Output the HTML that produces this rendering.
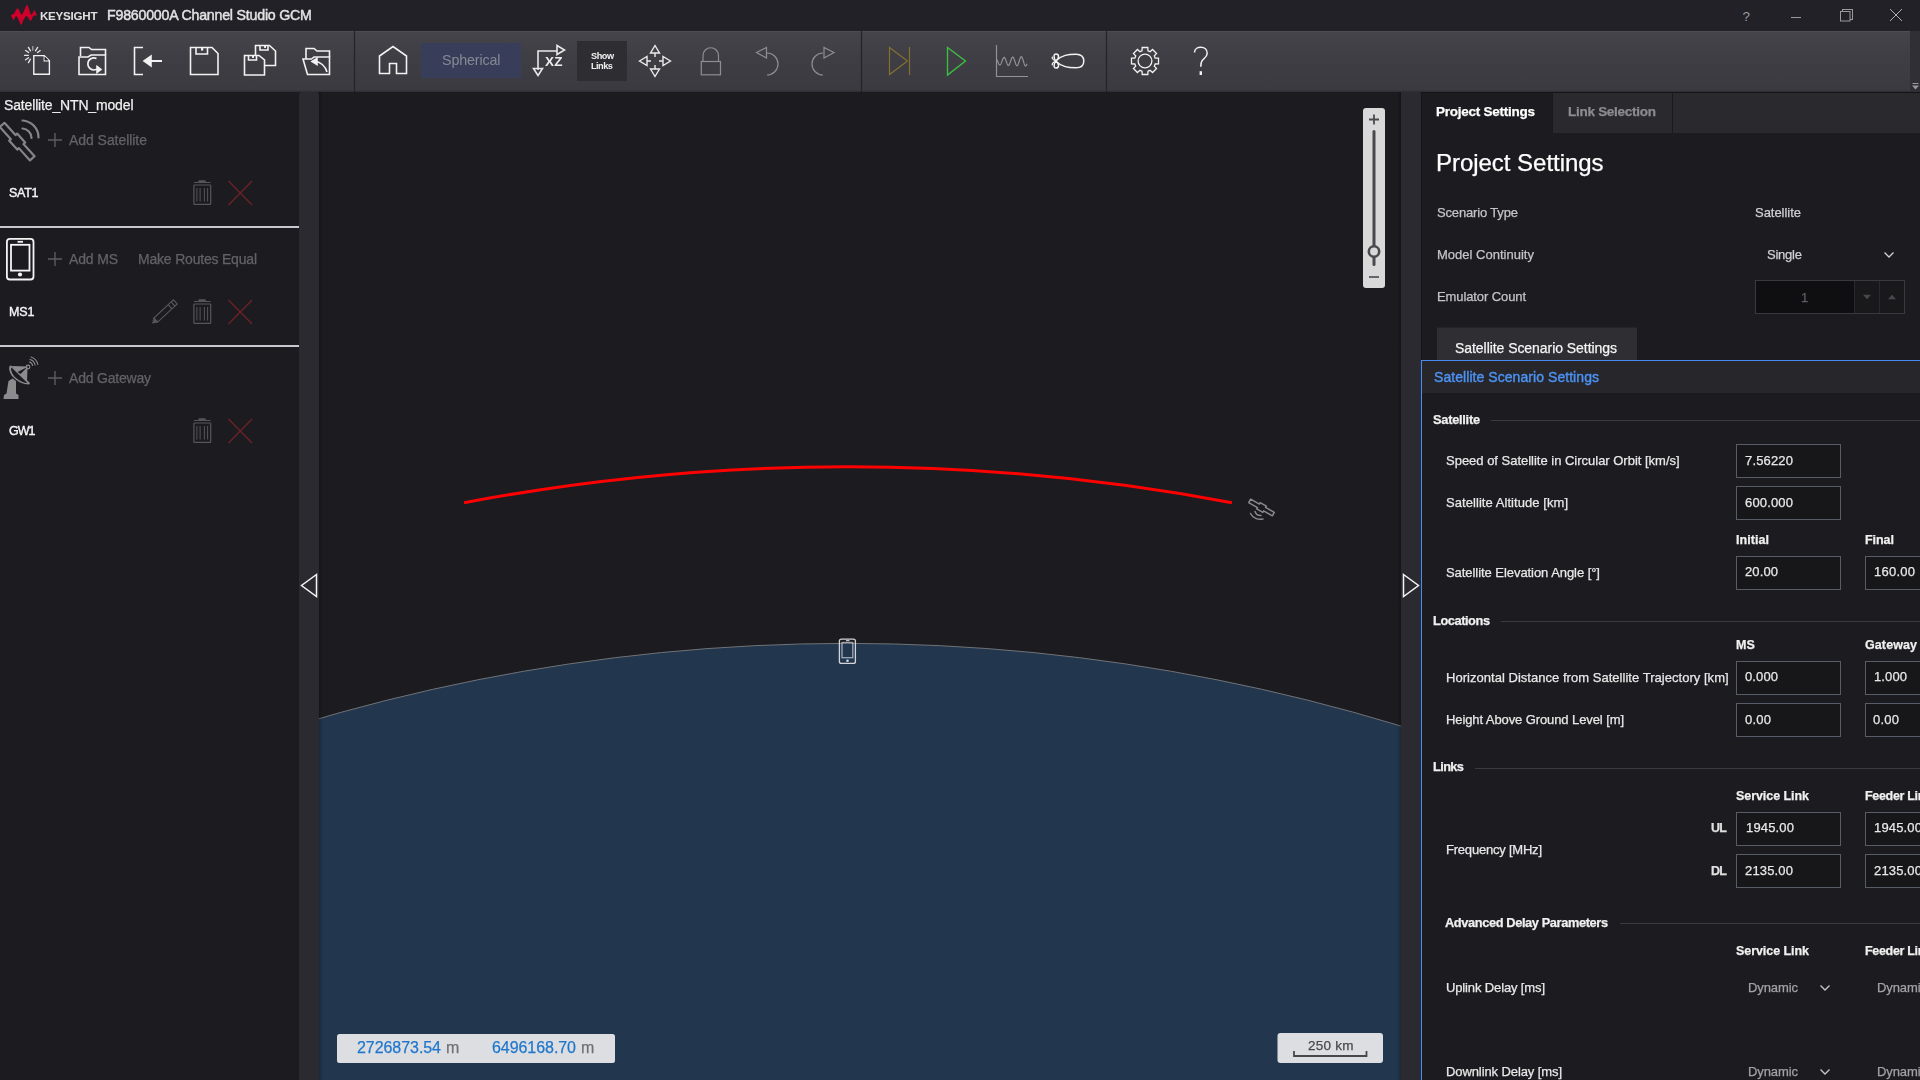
<!DOCTYPE html>
<html><head><meta charset="utf-8">
<style>
*{margin:0;padding:0;box-sizing:border-box}
html,body{width:1920px;height:1080px;overflow:hidden;background:#1c1c20;font-family:"Liberation Sans",sans-serif;color:#e6e6e6}
.a{position:absolute}
#title{left:0;top:0;width:1920px;height:31px;background:#222127}
#tb{left:0;top:31px;width:1910px;height:61px;background:linear-gradient(#45444a,#3f3e44 40%,#3b3a40 96%,#2f2e34);border-top:1px solid #4e4d53}
#tbr{left:1910px;top:31px;width:10px;height:61px;background:#302f35}
.t{position:absolute;white-space:pre;line-height:1;will-change:transform}
</style></head><body>
<div class="a" style="left:0;top:92px;width:1920px;height:988px;background:#1c1c20"></div>
<div id="title" class="a">
<svg class="a" style="left:0;top:0" width="1920" height="31">
<path d="M11.0 15.5 C11.30 14.85 12.92 14.82 14.0 13.6 C15.08 12.38 16.47 8.38 17.5 8.2 C18.53 8.02 19.50 11.43 20.2 12.5 C20.90 13.57 21.15 14.68 21.7 14.6 C22.25 14.52 22.62 13.60 23.5 12 C24.38 10.40 25.95 5.08 27 5.0 C28.05 4.92 29.10 9.83 29.8 11.5 C30.50 13.17 30.67 14.83 31.2 15.0 C31.73 15.17 32.45 13.28 33 12.5 C33.55 11.72 33.92 9.88 34.5 10.3 C35.08 10.72 36.42 14.08 36.5 15.0 C36.58 15.92 35.53 15.63 35 15.8 C34.47 15.97 34.02 15.17 33.3 16 C32.58 16.83 31.58 20.55 30.7 20.8 C29.82 21.05 28.78 18.27 28 17.5 C27.22 16.73 26.75 15.78 26 16.2 C25.25 16.62 24.32 18.57 23.5 20 C22.68 21.43 21.93 24.88 21.1 24.8 C20.27 24.72 19.32 20.97 18.5 19.5 C17.68 18.03 16.82 16.25 16.2 16.0 C15.58 15.75 15.28 17.30 14.8 18 C14.32 18.70 13.73 20.28 13.3 20.2 C12.87 20.12 12.58 18.28 12.2 17.5 C11.82 16.72 10.70 16.15 11.0 15.5Z" fill="#d0002a"/>
<text x="1742.5" y="21" font-family="Liberation Sans" font-size="13.5" fill="#9a9a9e">?</text>
<line x1="1791" y1="17.5" x2="1801" y2="17.5" stroke="#9a9a9e" stroke-width="1"/>
<rect x="1842.5" y="9.5" width="10" height="10" fill="none" stroke="#9a9a9e" stroke-width="1"/>
<rect x="1840.5" y="11.5" width="9.5" height="9.5" fill="#222127" stroke="#9a9a9e" stroke-width="1"/>
<path d="M1890 9 L1902 21 M1902 9 L1890 21" stroke="#b0b0b4" stroke-width="1"/>
</svg>
<div class="t" style="left:40px;top:9.8px;font-size:11.6px;font-weight:700;color:#e0e0e0;letter-spacing:-0.25px">KEYSIGHT</div>
<div class="t" style="left:107.3px;top:7.9px;font-size:14.2px;color:#e2e2e4;letter-spacing:-0.21px;-webkit-text-stroke:0.45px #e2e2e4">F9860000A Channel Studio GCM</div>
</div>


<div id="tb" class="a"></div>
<svg class="a" style="left:0;top:0" width="1920" height="92">
<defs><linearGradient id="tbg" x1="0" y1="0" x2="0" y2="1"><stop offset="0" stop-color="#403f45"/><stop offset="1" stop-color="#3a393f"/></linearGradient></defs>
<g fill="none" stroke="#f2f2f2" stroke-width="1.6" stroke-linejoin="miter">
<!-- new -->
<path d="M33.8 55.6 H44.2 L49.4 60.8 V74.3 H33.8 Z" stroke-width="1.4"/>
<path d="M44.2 55.6 V60.8 H49.4" stroke-width="1.2"/>
<path d="M44.6 56.5 L48.5 60.3 H44.6 Z" fill="#222" stroke="none"/>
<g stroke="#e8e8e8" stroke-width="1.3" stroke-linecap="round">
<path d="M32.8 46.6 V50.2" stroke="#a8a8aa"/>
<path d="M37.6 47.4 L35.5 50.8 M40.2 50.6 L37.5 52.6 M28.4 47.4 L30.5 50.8 M25.6 50.5 L28.7 52.5 M24.6 55.4 H28.3 M25.5 59.8 L28.6 57.8 M28.4 62.6 L30.4 59.2"/>
</g>
<!-- open folder -->
<path d="M79 74.5 V57 H88 L91 55 H105.5 V74.5 Z"/>
<path d="M80.5 56 V47.5 H89 L91.5 49.5 H105.5 V55"/>
<path d="M96.5 58.5 A6 6 0 1 0 96 69.5 H98"/>
<path d="M97 66.5 L101 69.5 L97 72.5 Z" fill="#f2f2f2"/>
<!-- import -->
<path d="M143 47.5 H134.5 V74.5 H143"/>
<path d="M150 61 H162" stroke-width="2"/>
<path d="M144 61 L151 56 L151 66 Z" fill="#f2f2f2"/>
<!-- save -->
<path d="M190.5 47.5 H212 L218 53.5 V74.5 H190.5 Z"/>
<path d="M196 47.5 V54 H207.5 V47.5"/>
<rect x="201" y="48" width="2.2" height="2.6" fill="#f2f2f2" stroke="none"/>
<!-- save as -->
<path d="M255.5 56 V45.5 H269.5 L275.5 51 V65.5 H265"/>
<path d="M260 45.5 V50 H268 V45.5"/>
<rect x="264" y="45.5" width="2" height="2.4" fill="#f2f2f2" stroke="none"/>
<path d="M244.5 55.5 H259 L264.5 60 V75 H244.5 Z"/>
<path d="M248.5 55.5 V60 H256.5 V55.5"/>
<rect x="252" y="55.5" width="2" height="2.4" fill="#f2f2f2" stroke="none"/>
<!-- open recent -->
<path d="M306 59 V48.5 H314 L317 51 H329.5 V57"/>
<path d="M303 59 H311.5 L314 57 H329.5 V74.5 H307.5 Z"/>
<path d="M327 72 C325.5 66 320 61.5 315 61.5"/>
<path d="M312 61.5 L317 58.5 L317 64.5 Z" fill="#f2f2f2"/>
<!-- home -->
<path d="M379.5 73.5 V56 L393 46.5 L406.5 56 V73.5 H396.5 V63.5 H389.5 V73.5 Z"/>
<!-- xz -->
<path d="M538 70 V51 H557" stroke="#e8e8e8"/>
<path d="M557 45.5 L564.5 50 L557 54.5 Z" stroke="#e8e8e8"/>
<path d="M533.5 68.5 H542.5 L538 75.5 Z" stroke="#e8e8e8"/>
<!-- move -->
<g stroke="#ececec" stroke-width="1.4">
<path d="M655 45.5 L659.5 53 H650.5 Z M655 76.5 L659.5 69 H650.5 Z M639.5 61 L647 56.5 V65.5 Z M670.5 61 L663 56.5 V65.5 Z"/>
<path d="M655 53 V57 M655 65 V69 M647 61 H651 M659 61 H663"/>
</g>
<!-- lock -->
<g stroke="#8e8e92" stroke-width="1.2">
<rect x="701.3" y="61.5" width="19.2" height="13.3"/>
<path d="M703 61.5 V55.5 A7.75 7.75 0 0 1 718.5 55.5 V61.5"/>
</g>
<!-- undo redo -->
<g stroke="#8e8e92" stroke-width="1.2">
<path d="M756.5 52.5 L766.5 47.5 V58 Z"/>
<path d="M767 53 A11 11 0 0 1 767 75"/>
<path d="M834 52.5 L824 47.5 V58 Z"/>
<path d="M823 53 A11 11 0 0 0 823 75"/>
</g>
<!-- step -->
<g stroke="#87712f" stroke-width="1.15">
<path d="M889.5 47.5 L907.5 61 L889.5 74.5 Z"/>
<path d="M909.5 47 V75"/>
</g>
<!-- play -->
<path d="M947.5 47.5 L965.5 61 L947.5 75 Z" stroke="#3cc043" stroke-width="1.35"/>
<!-- waveform -->
<g stroke="#939397" stroke-width="1.2">
<path d="M996.5 45 V76.5 H1028"/>
<path d="M997.00 59.67 L997.25 60.27 L997.50 60.92 L997.75 61.58 L998.00 62.23 L998.25 62.86 L998.50 63.44 L998.75 63.95 L999.00 64.38 L999.25 64.70 L999.50 64.91 L999.75 65.01 L1000.00 64.98 L1000.25 64.83 L1000.50 64.55 L1000.75 64.17 L1001.00 63.69 L1001.25 63.13 L1001.50 62.51 L1001.75 61.84 L1002.00 61.15 L1002.25 60.46 L1002.50 59.79 L1002.75 59.18 L1003.00 58.62 L1003.25 58.16 L1003.50 57.80 L1003.75 57.55 L1004.00 57.43 L1004.25 57.43 L1004.50 57.57 L1004.75 57.83 L1005.00 58.21 L1005.25 58.69 L1005.50 59.26 L1005.75 59.90 L1006.00 60.59 L1006.25 61.31 L1006.50 62.04 L1006.75 62.74 L1007.00 63.40 L1007.25 63.99 L1007.50 64.49 L1007.75 64.89 L1008.00 65.17 L1008.25 65.33 L1008.50 65.35 L1008.75 65.23 L1009.00 64.99 L1009.25 64.62 L1009.50 64.13 L1009.75 63.56 L1010.00 62.90 L1010.25 62.18 L1010.50 61.44 L1010.75 60.68 L1011.00 59.94 L1011.25 59.25 L1011.50 58.61 L1011.75 58.07 L1012.00 57.63 L1012.25 57.31 L1012.50 57.12 L1012.75 57.07 L1013.00 57.16 L1013.25 57.39 L1013.50 57.76 L1013.75 58.24 L1014.00 58.82 L1014.25 59.49 L1014.50 60.23 L1014.75 61.00 L1015.00 61.79 L1015.25 62.56 L1015.50 63.30 L1015.75 63.97 L1016.00 64.56 L1016.25 65.04 L1016.50 65.40 L1016.75 65.62 L1017.00 65.70 L1017.25 65.63 L1017.50 65.42 L1017.75 65.07 L1018.00 64.60 L1018.25 64.01 L1018.50 63.32 L1018.75 62.57 L1019.00 61.77 L1019.25 60.96 L1019.50 60.15 L1019.75 59.37 L1020.00 58.66 L1020.25 58.03 L1020.50 57.50 L1020.75 57.11 L1021.00 56.85 L1021.25 56.73 L1021.50 56.77 L1021.75 56.96 L1022.00 57.30 L1022.25 57.77 L1022.50 58.36 L1022.75 59.05 L1023.00 59.82 L1023.25 60.64 L1023.50 61.49 L1023.75 62.33 L1024.00 63.15 L1024.25 63.90 L1024.50 64.57 L1024.75 65.14 L1025.00 65.58 L1025.25 65.88 L1025.50 66.03 L1025.75 66.02 L1026.00 65.85 L1026.25 65.53 L1026.50 65.07 L1026.75 64.48 L1027.00 63.79"/>
</g>
<!-- antenna pattern -->
<g stroke="#f2f2f2" stroke-width="1.5">
<path d="M1055.5 61 C1062 55 1068 54.2 1076 54.2 C1081.5 54.2 1083.8 57 1083.8 61 C1083.8 65 1081.5 67.8 1076 67.8 C1068 67.8 1062 67 1055.5 61 Z"/>
<path d="M1055.5 61 C1053 56 1054 54 1056 54 C1059 54 1060 58 1055.5 61 C1060 64 1059 68 1056 68 C1054 68 1053 66 1055.5 61 Z"/>
<path d="M1055.5 61 C1051 58.5 1052 57 1053 57 M1055.5 61 C1051 63.5 1052 65 1053 65" stroke-width="1.2"/>
</g>
<!-- gear -->
<g stroke="#f2f2f2" stroke-width="1.3">
<circle cx="1145" cy="61" r="6.9"/>
<path d="M1155.17 58.02 L1158.51 58.19 L1158.51 63.81 L1155.17 63.98 L1154.30 66.09 L1156.54 68.57 L1152.57 72.54 L1150.09 70.30 L1147.98 71.17 L1147.81 74.51 L1142.19 74.51 L1142.02 71.17 L1139.91 70.30 L1137.43 72.54 L1133.46 68.57 L1135.70 66.09 L1134.83 63.98 L1131.49 63.81 L1131.49 58.19 L1134.83 58.02 L1135.70 55.91 L1133.46 53.43 L1137.43 49.46 L1139.91 51.70 L1142.02 50.83 L1142.19 47.49 L1147.81 47.49 L1147.98 50.83 L1150.09 51.70 L1152.57 49.46 L1156.54 53.43 L1154.30 55.91 Z"/>
</g>
<!-- help -->
<path d="M1194.5 52.5 C1194.5 49 1197.5 47.3 1200.8 47.3 C1204.5 47.3 1207.2 49.6 1207.2 53.2 C1207.2 56.8 1204 58.3 1202.2 60.5 C1201 62 1200.8 63.5 1200.8 66.8" stroke="#f2f2f2" stroke-width="1.5"/>
<rect x="1199.6" y="71.2" width="2.4" height="3.8" fill="#f2f2f2" stroke="none"/>
</g>
<!-- separators -->
<g stroke="#242328" stroke-width="1.2">
<path d="M354.5 31 V92 M861.5 31 V92 M1106.5 31 V92"/>
</g>
<!-- tbr arrow -->

</svg>
<div class="a" style="left:421px;top:43px;width:100px;height:35px;background:#383d59"></div>
<div class="t" style="left:442px;top:53.2px;font-size:14.3px;color:#878993;letter-spacing:-0.15px">Spherical</div>
<div class="a" style="left:577px;top:41px;width:50px;height:40px;background:#2d2d32"></div>
<div class="t" style="left:545px;top:55.3px;font-size:13.5px;font-weight:700;color:#ececec;letter-spacing:0.3px">XZ</div>
<div class="t" style="left:590.5px;top:52px;font-size:9.2px;font-weight:700;color:#f0f0f0;letter-spacing:-0.45px">Show</div>
<div class="t" style="left:590.5px;top:61.5px;font-size:9.2px;font-weight:700;color:#f0f0f0;letter-spacing:-0.55px">Links</div>

<div id="tbr" class="a"></div>
<svg class="a" style="left:1910px;top:31px" width="10" height="61" viewBox="1910 31 10 61"><path d="M1912.5 83.5 H1918.5" stroke="#9a9a9e" stroke-width="1"/><path d="M1912 85.5 H1919 L1915.5 89.5 Z" fill="#9a9a9e"/></svg>

<svg class="a" style="left:0;top:92px;overflow:visible" width="1" height="1">
<g transform="translate(0,-92)">
<!-- splitter left -->
<path d="M299 1080 V95 Q299 92 302 92 H316 Q319 92 319 95 V1080 Z" fill="#2b2a30"/>
<path d="M316.5 574.5 L301.5 585.5 L316.5 596.5 Z" fill="none" stroke="#f4f4f4" stroke-width="1.5"/>
<!-- separators -->
<rect x="0" y="226" width="299" height="2" fill="#c8c8d0"/>
<rect x="0" y="345" width="299" height="2" fill="#c8c8d0"/>
<!-- satellite icon -->
<g fill="none" stroke="#858588" stroke-width="2.2" stroke-linecap="round">
<g transform="translate(17.2,141.6) rotate(48)">
<path d="M-22.5 -3.1 H-6 V-5.3 H6 V-3.1 H22.5 V3.1 H6 V5.3 H-6 V3.1 H-22.5 Z" stroke-linejoin="round"/>
</g>
<path d="M22.5 120.5 A17 17 0 0 1 38.5 137.5"/>
<path d="M22.5 128.5 A9.5 9.5 0 0 1 31.5 138"/>
</g>
<!-- plus icons -->
<g stroke="#5c5c60" stroke-width="1.4">
<path d="M48 140 H62 M55 133 V147"/>
<path d="M48 259 H62 M55 252 V266"/>
<path d="M48 378 H62 M55 371 V385"/>
</g>
<!-- phone icon -->
<g fill="none" stroke="#f4f4f4" stroke-width="1.8">
<rect x="6.9" y="238.9" width="26.6" height="40.6" rx="3"/>
<rect x="11" y="244.8" width="18.5" height="25.8"/>
<path d="M17.5 241.8 H23"/>
</g>
<circle cx="20" cy="274.5" r="2.1" fill="#f4f4f4"/>
<!-- gateway dish -->
<g fill="#8c8c8e">
<path d="M3.5 399 L4 395 L6.5 393.5 L8.5 381 L12.5 378.5 L16 381 L16 393.5 L18.5 395 L18.5 399 Z"/>
<path d="M10.5 365.5 C8 366 9 373 13 377 C17 381.5 23 384.5 29 384.5 C30 384 30 383 29.5 382.5 L11.5 366 C11 365.5 10.8 365.4 10.5 365.5 Z"/>
<path d="M11.5 366 L27.5 366.5 L27 382 Z"/>
</g>
<path d="M11.5 367.5 C10 369 12 374 15.5 377.5 C19 381 24 383 27.5 383 Z" fill="#1c1c20"/>
<path d="M17.5 372 L27.5 367 L20.5 374 Z" fill="#1c1c20"/>
<circle cx="28" cy="367" r="1.8" fill="none" stroke="#8c8c8e" stroke-width="1.2"/>
<g fill="none" stroke="#8c8c8e" stroke-width="1.1" stroke-linecap="round">
<path d="M29.5 362 A4 4 0 0 1 32.5 365.5"/>
<path d="M30 359.5 A7 7 0 0 1 35 365"/>
<path d="M31 357 A10 10 0 0 1 37.8 364.5"/>
</g>
<!-- trash icons -->
<g id="trash1" fill="none" stroke="#55555a" stroke-width="1.2">
<path d="M194 182.5 H210.5" stroke-width="1"/>
<rect x="198.3" y="180.2" width="7.6" height="2" rx="1" fill="#55555a" stroke="none"/>
<rect x="193.9" y="185" width="16.8" height="19.4" rx="0.6"/>
<path d="M196.9 188 V201.5 M200.1 188 V201.5 M204.4 188 V201.5 M207.6 188 V201.5" stroke-width="1"/>
</g>
<g transform="translate(0,119)"><g fill="none" stroke="#55555a" stroke-width="1.2">
<path d="M194 182.5 H210.5" stroke-width="1"/>
<rect x="198.3" y="180.2" width="7.6" height="2" rx="1" fill="#55555a" stroke="none"/>
<rect x="193.9" y="185" width="16.8" height="19.4" rx="0.6"/>
<path d="M196.9 188 V201.5 M200.1 188 V201.5 M204.4 188 V201.5 M207.6 188 V201.5" stroke-width="1"/>
</g></g>
<g transform="translate(0,238)"><g fill="none" stroke="#55555a" stroke-width="1.2">
<path d="M194 182.5 H210.5" stroke-width="1"/>
<rect x="198.3" y="180.2" width="7.6" height="2" rx="1" fill="#55555a" stroke="none"/>
<rect x="193.9" y="185" width="16.8" height="19.4" rx="0.6"/>
<path d="M196.9 188 V201.5 M200.1 188 V201.5 M204.4 188 V201.5 M207.6 188 V201.5" stroke-width="1"/>
</g></g>
<!-- pencil -->
<g fill="none" stroke="#5a5a5e" stroke-width="1.1">
<g transform="translate(164.2,312.2) rotate(-43)">
<path d="M-15.5 0 L-11.5 -2.8 H12 V2.8 H-11.5 Z"/>
<path d="M-11.5 -2.8 V2.8 M8 -2.8 V2.8 M12 -2.8 H15.2 V2.8 H12"/>
</g>
<path d="M153 323.3 L155 318.8 L157.5 321 Z" fill="#5a5a5e" stroke="none"/>
</g>
<!-- red x -->
<g stroke="#6e2226" stroke-width="1.3">
<path d="M228.5 181 L252 205 M252 181 L228.5 205"/>
<path d="M228.5 300 L252 324 M252 300 L228.5 324"/>
<path d="M228.5 419 L252 443 M252 419 L228.5 443"/>
</g>
</g>
</svg>

<svg class="a" style="left:319px;top:92px" width="1082" height="988" viewBox="319 92 1082 988">
<rect x="319" y="92" width="1082" height="988" fill="#1c1c20"/>
<circle cx="847.4" cy="2537.9" r="1894.5" fill="#22364d" stroke="#707378" stroke-width="1"/>
<path d="M464 502.7 A2066 2066 0 0 1 1232 502.8" fill="none" stroke="#ff0000" stroke-width="3" stroke-linecap="butt"/>
<defs>
<linearGradient id="shl" x1="0" x2="1"><stop offset="0" stop-color="#000" stop-opacity="0.25"/><stop offset="1" stop-color="#000" stop-opacity="0"/></linearGradient>
<linearGradient id="shr" x1="1" x2="0"><stop offset="0" stop-color="#000" stop-opacity="0.25"/><stop offset="1" stop-color="#000" stop-opacity="0"/></linearGradient>
</defs>
<rect x="319" y="92" width="4" height="988" fill="url(#shl)"/>
<rect x="1397" y="92" width="4" height="988" fill="url(#shr)"/>
<!-- satellite in scene -->
<g fill="none" stroke="#8a8a8c" stroke-width="1.5" stroke-linejoin="round" stroke-linecap="round">
<g transform="translate(1261.5,507.5) rotate(29)">
<path d="M-13.5 -2 H-3.5 V-3.6 H3.5 V-2 H13.5 V2 H3.5 V3.6 H-3.5 V2 H-13.5 Z"/>
</g>
<path d="M1255 511.5 A6 6 0 0 0 1261 515.5"/>
<path d="M1250.5 513.5 A11 11 0 0 0 1263 519"/>
</g>
<!-- MS in scene -->
<g fill="none" stroke-width="1.3">
<rect x="839.4" y="639.1" width="16" height="24.3" rx="2" stroke="#e6e6ea" stroke-opacity="0.9"/>
<rect x="842" y="642.5" width="10.8" height="15.2" stroke="#c8d2e0" stroke-opacity="0.75"/>
<path d="M846 640.6 H849.5" stroke="#c0c0c4"/>
</g>
<circle cx="847.5" cy="660.8" r="1.3" fill="#d0d8e4"/>
<!-- zoom slider -->
<rect x="1363" y="108" width="22" height="180" rx="3" fill="#d9d9da"/>
<path d="M1369 119.5 H1379 M1374 114.5 V124.5" stroke="#4a4a4c" stroke-width="1.8"/>
<path d="M1374 131.5 V264.5" stroke="#4a4a4c" stroke-width="3" stroke-linecap="round"/>
<circle cx="1374" cy="251.5" r="5.2" fill="#d9d9da" stroke="#4a4a4c" stroke-width="2.6"/>
<path d="M1369 277 H1379" stroke="#4a4a4c" stroke-width="1.6"/>
<!-- coordinate box -->
<rect x="337" y="1034" width="278" height="29" rx="2.5" fill="#dcdee2"/>
<!-- scale box -->
<rect x="1277.5" y="1033" width="105.5" height="30" rx="3" fill="#dcdee2"/>
<path d="M1294 1051 V1056 H1366.5 V1051" fill="none" stroke="#484848" stroke-width="1.8"/>
</svg>
<!-- right splitter -->
<div class="a" style="left:1401px;top:92px;width:20px;height:988px;background:#2b2a30"></div>
<svg class="a" style="left:1401px;top:92px" width="20" height="988" viewBox="1401 92 20 988">
<path d="M1403.5 574.5 L1418.5 585.5 L1403.5 596.5 Z" fill="none" stroke="#f4f4f4" stroke-width="1.5"/>
</svg>

<svg class="a" style="left:1421px;top:92px" width="499" height="988" viewBox="1421 92 499 988">
<rect x="1421" y="92" width="499" height="988" fill="#1c1c20"/>
<!-- tab bar -->
<rect x="1421" y="92" width="499" height="1" fill="#141417"/>
<rect x="1421" y="93" width="499" height="40" fill="#29292e"/>
<rect x="1422" y="93" width="130" height="40" fill="#1c1c20"/>
<rect x="1552" y="93" width="1" height="40" fill="#1a1a1d"/>
<rect x="1672" y="93" width="1" height="40" fill="#1a1a1d"/>
<rect x="1421" y="92" width="1" height="988" fill="#141417"/>
<!-- chevron single -->
<path d="M1884.5 252.5 L1889 257 L1893.5 252.5" fill="none" stroke="#d0d0d4" stroke-width="1.3"/>
<!-- spinbox -->
<rect x="1755.5" y="280.5" width="149" height="33" fill="#19191c" stroke="#3a3a3e" stroke-width="1"/>
<rect x="1756" y="281" width="98" height="32" fill="#0f0f11"/>
<path d="M1854.5 281 V313 M1879.5 281 V313" stroke="#2a2a2e" stroke-width="1"/>
<path d="M1863 294.8 H1871 L1867 299.2 Z" fill="#48484c"/>
<path d="M1888 299.2 H1896 L1892 294.8 Z" fill="#48484c"/>
<!-- sat scenario button -->
<rect x="1437" y="327.5" width="200" height="33" fill="#2e2e33"/>
<!-- blue box -->
<rect x="1421" y="360" width="499" height="33" fill="#26262b"/>
<rect x="1421" y="360" width="499" height="1" fill="#4789ee"/>
<rect x="1421" y="360" width="1" height="720" fill="#4a8cf2"/>
<!-- section lines -->
<g fill="#3a3a3f">
<rect x="1491" y="420" width="429" height="1"/>
<rect x="1501" y="621" width="419" height="1"/>
<rect x="1475" y="768" width="445" height="1"/>
<rect x="1620" y="923" width="300" height="1"/>
</g>
<!-- inputs -->
<g fill="#17171a" stroke="#585c68" stroke-width="1">
<rect x="1736.5" y="444.5" width="104" height="33"/>
<rect x="1736.5" y="486.5" width="104" height="33"/>
<rect x="1736.5" y="556.5" width="104" height="33"/>
<rect x="1865.5" y="556.5" width="104" height="33"/>
<rect x="1736.5" y="661.5" width="104" height="33"/>
<rect x="1865.5" y="661.5" width="104" height="33"/>
<rect x="1736.5" y="703.5" width="104" height="33"/>
<rect x="1865.5" y="703.5" width="104" height="33"/>
<rect x="1736.5" y="812.5" width="104" height="33"/>
<rect x="1865.5" y="812.5" width="104" height="33"/>
<rect x="1736.5" y="854.5" width="104" height="33"/>
<rect x="1865.5" y="854.5" width="104" height="33"/>
</g>
<!-- dynamic chevrons -->
<g fill="none" stroke="#c8c8cc" stroke-width="1.3">
<path d="M1820.5 985.5 L1825 990 L1829.5 985.5"/>
<path d="M1820.5 1069.5 L1825 1074 L1829.5 1069.5"/>
</g>
</svg>

<div class="t" style="left:4px;top:97.97px;font-size:14px;color:#f0f0f0;letter-spacing:-0.155px;-webkit-text-stroke:0.25px #f0f0f0">Satellite_NTN_model</div>
<div class="t" style="left:69px;top:132.77px;font-size:14px;color:#636366;letter-spacing:-0.051px;-webkit-text-stroke:0.25px #636366">Add Satellite</div>
<div class="t" style="left:9px;top:186.77px;font-size:12.5px;color:#f4f4f4;letter-spacing:-0.281px;-webkit-text-stroke:0.4px #f4f4f4">SAT1</div>
<div class="t" style="left:69px;top:251.77px;font-size:14px;color:#636366;letter-spacing:-0.163px;-webkit-text-stroke:0.25px #636366">Add MS</div>
<div class="t" style="left:138px;top:251.77px;font-size:14px;color:#636366;letter-spacing:-0.199px;-webkit-text-stroke:0.25px #636366">Make Routes Equal</div>
<div class="t" style="left:9px;top:305.77px;font-size:12.5px;color:#f4f4f4;letter-spacing:-0.102px;-webkit-text-stroke:0.4px #f4f4f4">MS1</div>
<div class="t" style="left:69px;top:370.77px;font-size:14px;color:#636366;letter-spacing:-0.206px;-webkit-text-stroke:0.25px #636366">Add Gateway</div>
<div class="t" style="left:9px;top:424.77px;font-size:12.5px;color:#f4f4f4;letter-spacing:-0.992px;-webkit-text-stroke:0.4px #f4f4f4">GW1</div>
<div class="t" style="left:357px;top:1039.91px;font-size:16px;color:#1f77cc;letter-spacing:-0.059px;-webkit-text-stroke:0.25px #1f77cc">2726873.54</div>
<div class="t" style="left:446px;top:1039.91px;font-size:16px;color:#707070;letter-spacing:0.672px;-webkit-text-stroke:0.25px #707070">m</div>
<div class="t" style="left:492px;top:1039.91px;font-size:16px;color:#1f77cc;letter-spacing:-0.059px;-webkit-text-stroke:0.25px #1f77cc">6496168.70</div>
<div class="t" style="left:581px;top:1039.91px;font-size:16px;color:#707070;letter-spacing:0.672px;-webkit-text-stroke:0.25px #707070">m</div>
<div class="t" style="left:1307.5px;top:1038.84px;font-size:13.5px;color:#484848;letter-spacing:0.244px;-webkit-text-stroke:0.25px #484848">250 km</div>
<div class="t" style="left:1436px;top:105.34px;font-size:13.5px;color:#ffffff;font-weight:700;letter-spacing:-0.252px;-webkit-text-stroke:0.25px #ffffff">Project Settings</div>
<div class="t" style="left:1568px;top:105.34px;font-size:13.5px;color:#8c8c90;font-weight:700;letter-spacing:-0.272px;-webkit-text-stroke:0.25px #8c8c90">Link Selection</div>
<div class="t" style="left:1435.8px;top:150.87px;font-size:24px;color:#ffffff;letter-spacing:-0.033px;-webkit-text-stroke:0.25px #ffffff">Project Settings</div>
<div class="t" style="left:1437px;top:206.10px;font-size:13px;color:#c4c4c8;letter-spacing:-0.156px;-webkit-text-stroke:0.25px #c4c4c8">Scenario Type</div>
<div class="t" style="left:1755px;top:206.10px;font-size:13px;color:#d0d0d4;letter-spacing:-0.031px;-webkit-text-stroke:0.25px #d0d0d4">Satellite</div>
<div class="t" style="left:1437px;top:248.10px;font-size:13px;color:#c4c4c8;letter-spacing:0.011px;-webkit-text-stroke:0.25px #c4c4c8">Model Continuity</div>
<div class="t" style="left:1767px;top:248.10px;font-size:13px;color:#d0d0d4;letter-spacing:-0.228px;-webkit-text-stroke:0.25px #d0d0d4">Single</div>
<div class="t" style="left:1437px;top:290.10px;font-size:13px;color:#c4c4c8;letter-spacing:-0.102px;-webkit-text-stroke:0.25px #c4c4c8">Emulator Count</div>
<div class="t" style="left:1801px;top:291.10px;font-size:13px;color:#5e5e62;-webkit-text-stroke:0.25px #5e5e62">1</div>
<div class="t" style="left:1455px;top:340.97px;font-size:14px;color:#f4f4f4;letter-spacing:-0.055px;-webkit-text-stroke:0.25px #f4f4f4">Satellite Scenario Settings</div>
<div class="t" style="left:1434px;top:369.67px;font-size:14px;color:#4d92f2;letter-spacing:0.060px;-webkit-text-stroke:0.4px #4d92f2">Satellite Scenario Settings</div>
<div class="t" style="left:1433px;top:413.83px;font-size:12.8px;color:#f0f0f0;font-weight:700;letter-spacing:-0.260px;-webkit-text-stroke:0.25px #f0f0f0">Satellite</div>
<div class="t" style="left:1446px;top:454.10px;font-size:13px;color:#e8e8e8;letter-spacing:-0.012px;-webkit-text-stroke:0.25px #e8e8e8">Speed of Satellite in Circular Orbit [km/s]</div>
<div class="t" style="left:1745px;top:454.10px;font-size:13px;color:#e8e8e8;letter-spacing:0.167px;-webkit-text-stroke:0.25px #e8e8e8">7.56220</div>
<div class="t" style="left:1446px;top:496.10px;font-size:13px;color:#e8e8e8;letter-spacing:0.060px;-webkit-text-stroke:0.25px #e8e8e8">Satellite Altitude [km]</div>
<div class="t" style="left:1745px;top:496.10px;font-size:13px;color:#e8e8e8;letter-spacing:0.167px;-webkit-text-stroke:0.25px #e8e8e8">600.000</div>
<div class="t" style="left:1736px;top:534.17px;font-size:12.5px;color:#f0f0f0;font-weight:700;letter-spacing:0.057px;-webkit-text-stroke:0.25px #f0f0f0">Initial</div>
<div class="t" style="left:1865px;top:534.17px;font-size:12.5px;color:#f0f0f0;font-weight:700;letter-spacing:-0.043px;-webkit-text-stroke:0.25px #f0f0f0">Final</div>
<div class="t" style="left:1446px;top:565.60px;font-size:13px;color:#e8e8e8;letter-spacing:-0.055px;-webkit-text-stroke:0.25px #e8e8e8">Satellite Elevation Angle [°]</div>
<div class="t" style="left:1745px;top:565.10px;font-size:13px;color:#e8e8e8;letter-spacing:0.113px;-webkit-text-stroke:0.25px #e8e8e8">20.00</div>
<div class="t" style="left:1874px;top:565.10px;font-size:13px;color:#e8e8e8;letter-spacing:0.247px;-webkit-text-stroke:0.25px #e8e8e8">160.00</div>
<div class="t" style="left:1433px;top:615.13px;font-size:12.8px;color:#f0f0f0;font-weight:700;letter-spacing:-0.430px;-webkit-text-stroke:0.25px #f0f0f0">Locations</div>
<div class="t" style="left:1736px;top:639.17px;font-size:12.5px;color:#f0f0f0;font-weight:700;-webkit-text-stroke:0.25px #f0f0f0">MS</div>
<div class="t" style="left:1865px;top:639.17px;font-size:12.5px;color:#f0f0f0;font-weight:700;letter-spacing:0.096px;-webkit-text-stroke:0.25px #f0f0f0">Gateway</div>
<div class="t" style="left:1446px;top:670.60px;font-size:13px;color:#e8e8e8;letter-spacing:0.032px;-webkit-text-stroke:0.25px #e8e8e8">Horizontal Distance from Satellite Trajectory [km]</div>
<div class="t" style="left:1745px;top:670.10px;font-size:13px;color:#e8e8e8;letter-spacing:0.113px;-webkit-text-stroke:0.25px #e8e8e8">0.000</div>
<div class="t" style="left:1874px;top:670.10px;font-size:13px;color:#e8e8e8;letter-spacing:0.113px;-webkit-text-stroke:0.25px #e8e8e8">1.000</div>
<div class="t" style="left:1446px;top:712.60px;font-size:13px;color:#e8e8e8;letter-spacing:-0.095px;-webkit-text-stroke:0.25px #e8e8e8">Height Above Ground Level [m]</div>
<div class="t" style="left:1745px;top:712.60px;font-size:13px;color:#e8e8e8;letter-spacing:0.229px;-webkit-text-stroke:0.25px #e8e8e8">0.00</div>
<div class="t" style="left:1873px;top:712.60px;font-size:13px;color:#e8e8e8;letter-spacing:0.229px;-webkit-text-stroke:0.25px #e8e8e8">0.00</div>
<div class="t" style="left:1433px;top:761.13px;font-size:12.8px;color:#f0f0f0;font-weight:700;letter-spacing:-0.609px;-webkit-text-stroke:0.25px #f0f0f0">Links</div>
<div class="t" style="left:1736px;top:789.67px;font-size:12.5px;color:#f0f0f0;font-weight:700;letter-spacing:-0.060px;-webkit-text-stroke:0.25px #f0f0f0">Service Link</div>
<div class="t" style="left:1865px;top:789.67px;font-size:12.5px;color:#f0f0f0;font-weight:700;letter-spacing:-0.317px;-webkit-text-stroke:0.25px #f0f0f0">Feeder Link</div>
<div class="t" style="left:1711px;top:822.17px;font-size:12.5px;color:#e0e0e0;font-weight:700;letter-spacing:-0.672px;-webkit-text-stroke:0.25px #e0e0e0">UL</div>
<div class="t" style="left:1745.5px;top:821.10px;font-size:13px;color:#e8e8e8;letter-spacing:0.167px;-webkit-text-stroke:0.25px #e8e8e8">1945.00</div>
<div class="t" style="left:1874px;top:821.10px;font-size:13px;color:#e8e8e8;letter-spacing:0.167px;-webkit-text-stroke:0.25px #e8e8e8">1945.00</div>
<div class="t" style="left:1446px;top:842.60px;font-size:13px;color:#e8e8e8;letter-spacing:-0.213px;-webkit-text-stroke:0.25px #e8e8e8">Frequency [MHz]</div>
<div class="t" style="left:1710.5px;top:864.67px;font-size:12.5px;color:#e0e0e0;font-weight:700;letter-spacing:-0.672px;-webkit-text-stroke:0.25px #e0e0e0">DL</div>
<div class="t" style="left:1745px;top:863.60px;font-size:13px;color:#e8e8e8;letter-spacing:0.167px;-webkit-text-stroke:0.25px #e8e8e8">2135.00</div>
<div class="t" style="left:1873.5px;top:863.60px;font-size:13px;color:#e8e8e8;letter-spacing:0.167px;-webkit-text-stroke:0.25px #e8e8e8">2135.00</div>
<div class="t" style="left:1445px;top:917.43px;font-size:12.8px;color:#f0f0f0;font-weight:700;letter-spacing:-0.381px;-webkit-text-stroke:0.25px #f0f0f0">Advanced Delay Parameters</div>
<div class="t" style="left:1736px;top:944.67px;font-size:12.5px;color:#f0f0f0;font-weight:700;letter-spacing:-0.060px;-webkit-text-stroke:0.25px #f0f0f0">Service Link</div>
<div class="t" style="left:1865px;top:944.67px;font-size:12.5px;color:#f0f0f0;font-weight:700;letter-spacing:-0.317px;-webkit-text-stroke:0.25px #f0f0f0">Feeder Link</div>
<div class="t" style="left:1446px;top:980.60px;font-size:13px;color:#e8e8e8;letter-spacing:-0.134px;-webkit-text-stroke:0.25px #e8e8e8">Uplink Delay [ms]</div>
<div class="t" style="left:1748px;top:980.60px;font-size:13px;color:#a2a2a6;letter-spacing:-0.096px;-webkit-text-stroke:0.25px #a2a2a6">Dynamic</div>
<div class="t" style="left:1877px;top:980.60px;font-size:13px;color:#a2a2a6;letter-spacing:-0.096px;-webkit-text-stroke:0.25px #a2a2a6">Dynamic</div>
<div class="t" style="left:1446px;top:1064.60px;font-size:13px;color:#e8e8e8;letter-spacing:-0.098px;-webkit-text-stroke:0.25px #e8e8e8">Downlink Delay [ms]</div>
<div class="t" style="left:1748px;top:1064.60px;font-size:13px;color:#a2a2a6;letter-spacing:-0.096px;-webkit-text-stroke:0.25px #a2a2a6">Dynamic</div>
<div class="t" style="left:1877px;top:1064.60px;font-size:13px;color:#a2a2a6;letter-spacing:-0.096px;-webkit-text-stroke:0.25px #a2a2a6">Dynamic</div>
</body></html>
